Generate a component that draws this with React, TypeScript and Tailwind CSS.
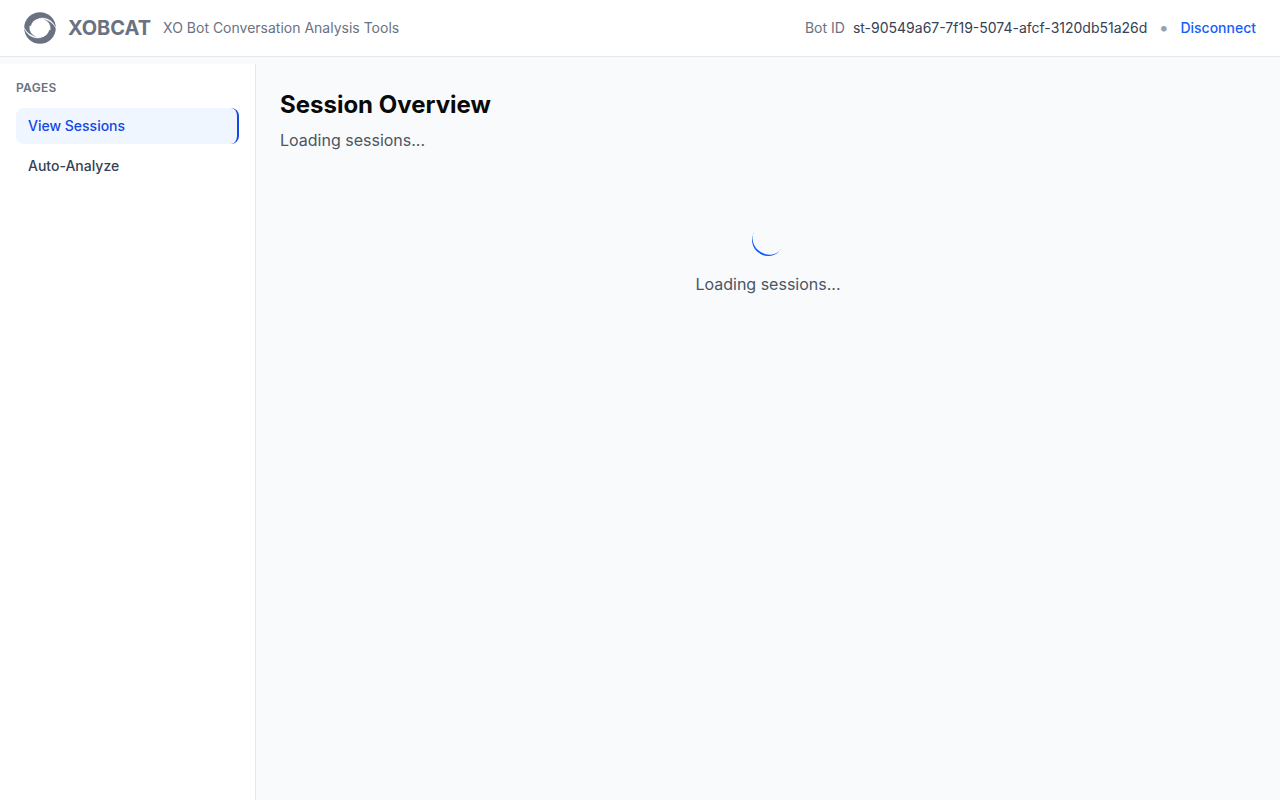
const swirl = "M14.5 6.600C21 4.600 28.800 7.600 32 16.500C29 10 22.500 6.800 14.500 6.600Z";
const strand = "M18.500 7.400C24.500 9 26.800 12.500 26.200 18L25 18C24.800 12.500 22.500 9.200 18.500 7.400Z";

function Logo() {
  return (
    <svg viewBox="0 0 32 32" className="size-8 text-gray-500" aria-hidden="true">
      <circle cx="16" cy="16" r="12.6" fill="none" stroke="currentColor" strokeWidth="6.4" />
      <g fill="white" stroke="white" strokeWidth="0.4">
        <path d={swirl} />
        <path d={strand} />
        <path d={swirl} transform="rotate(180 16 16)" />
        <path d={strand} transform="rotate(180 16 16)" />
      </g>
    </svg>
  );
}

export default function App() {
  return (
    <div className="flex min-h-screen flex-col bg-gray-50 font-['Inter',sans-serif] text-neutral-950">
      <header className="flex items-center justify-between border-b border-gray-200 bg-white px-6 py-3">
        <div className="flex items-center gap-3">
          <Logo />
          <span className="text-xl font-bold text-gray-500">XOBCAT</span>
          <span className="text-sm text-gray-500">XO Bot Conversation Analysis Tools</span>
        </div>
        <div className="flex items-center gap-3 text-sm">
          <div className="flex items-center gap-2">
            <span className="text-gray-500">Bot ID</span>
            <span className="text-gray-700">st-90549a67-7f19-5074-afcf-3120db51a26d</span>
          </div>
          <span className="flex w-[9px] justify-center text-lg leading-5 text-gray-400">•</span>
          <button type="button" className="font-medium text-blue-600">Disconnect</button>
        </div>
      </header>
      <div className="flex flex-1 pt-[7px]">
        <aside className="w-64 shrink-0 border-r border-gray-200 bg-white p-4">
          <h2 className="mb-3 text-xs leading-4 font-semibold tracking-wide text-gray-500 uppercase">Pages</h2>
          <nav className="flex flex-col gap-1">
            <a href="#sessions" aria-current="page" className="rounded-lg border-r-2 border-blue-700 bg-blue-50 px-3 py-2 text-sm font-medium text-blue-700">View Sessions</a>
            <a href="#analyze" className="rounded-lg px-3 py-2 text-sm font-medium text-gray-700">Auto-Analyze</a>
          </nav>
        </aside>
        <main className="min-w-0 flex-1 p-6">
          <h1 className="mb-[6px] text-2xl leading-[34px] font-bold">Session Overview</h1>
          <p className="text-gray-600">Loading sessions...</p>
          <div className="flex flex-col items-center pt-18" role="status">
            <div className="mb-4 size-8 rotate-33 rounded-full border-b-2 border-blue-600" />
            <p className="text-gray-600">Loading sessions...</p>
          </div>
        </main>
      </div>
    </div>
  );
}
